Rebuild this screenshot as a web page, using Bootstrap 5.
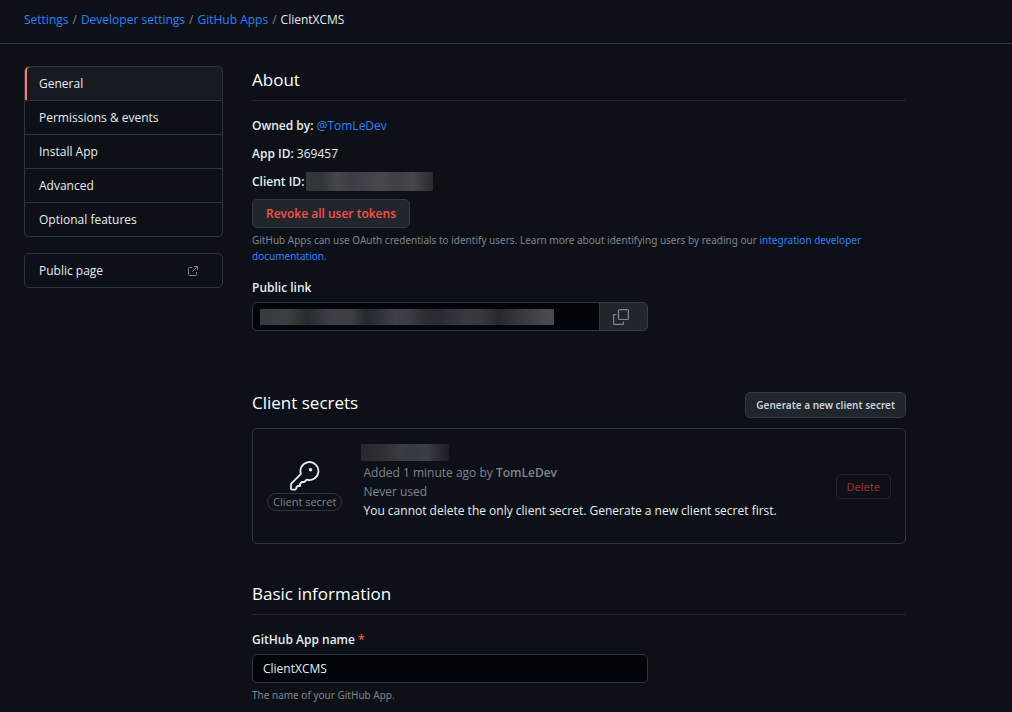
<!DOCTYPE html>
<html lang="en" data-bs-theme="dark">
<head>
<meta charset="utf-8">
<meta name="viewport" content="width=device-width, initial-scale=1">
<title>ClientXCMS</title>
<link href="https://cdn.jsdelivr.net/npm/bootstrap@5.3.0/dist/css/bootstrap.min.css" rel="stylesheet">
<style>
  body { background: #0d1117; color: #e6edf3; font-family: "Open Sans", "Noto Sans", sans-serif; font-size: 12px; line-height: 18px; }
  a { color: #2f81f7; text-decoration: none; }
  a:hover { text-decoration: underline; }
  b, .form-label { font-weight: 600; }
  .topbar { padding: 10px 24px 13px; border-bottom: 1px solid #30363d; }
  .breadcrumb { --bs-breadcrumb-font-size: 12px; --bs-breadcrumb-item-padding-x: 4px; --bs-breadcrumb-divider-color: #7d8590; --bs-breadcrumb-item-active-color: #e6edf3; line-height: 20px; }
  .page { max-width: 930px; padding: 22px 24px 8px; column-gap: 29px; }
  .side { flex: 0 0 199px; }
  .side .list-group { --bs-list-group-bg: #0d1117; --bs-list-group-border-color: #30363d; --bs-list-group-color: #e6edf3; --bs-list-group-action-color: #e6edf3; --bs-list-group-active-bg: #161b22; --bs-list-group-active-color: #e6edf3; --bs-list-group-active-border-color: #30363d; --bs-list-group-item-padding-x: 14px; --bs-list-group-item-padding-y: 8px; --bs-list-group-border-radius: 5px; }
  .side .list-group-item { padding-bottom: 7px; color: #e6edf3; }
  .side .list-group-item:hover { text-decoration: none; }
  .side .active { box-shadow: inset 2px 0 #f78166; }
  h2 { font-size: 17px; font-weight: 400; line-height: 22px; margin: 0; }
  .ruled { border-bottom: 1px solid #21262d; padding: 3px 0 9px; margin-bottom: 16px; }
  .fact { margin: 10px 0 9px; }
  .client-id { column-gap: 2px; }
  .hint { font-family: "Noto Sans", sans-serif; font-size: 10px; line-height: 16px; color: #7d8590; margin: 4px 0 0; }
  .dim { color: #7d8590; }
  .btn { --bs-btn-bg: #21262d; --bs-btn-border-color: #363b42; --bs-btn-color: #c9d1d9; --bs-btn-hover-bg: #30363d; --bs-btn-hover-border-color: #8b949e; --bs-btn-font-size: 12px; --bs-btn-font-weight: 600; --bs-btn-line-height: 19px; --bs-btn-padding-y: 4px; --bs-btn-padding-x: 13px; --bs-btn-border-radius: 5px; }
  .btn-revoke { --bs-btn-color: #f85149; --bs-btn-hover-color: #f85149; }
  .btn-compact { --bs-btn-font-size: 10px; --bs-btn-line-height: 16px; --bs-btn-padding-x: 10px; font-family: "Noto Sans", sans-serif; }
  .btn-delete { --bs-btn-font-size: 11px; --bs-btn-font-weight: 400; --bs-btn-disabled-bg: #0d1117; --bs-btn-disabled-border-color: #21262d; --bs-btn-disabled-color: #9b2f2d; --bs-btn-disabled-opacity: 1; --bs-btn-line-height: 15px; }
  .form-label { margin-bottom: 5px; display: block; }
  .hint + .form-label { margin-top: 15px; }
  .field { max-width: 396px; }
  .form-control, .form-control:focus { background: #010409; border-color: #30363d; color: #e6edf3; font-size: 12px; line-height: 19px; padding: 4px 10px; border-radius: 5px; }
  .btn-copy { color: #7d8590; padding-right: 18px; }
  .redact { display: inline-block; background: linear-gradient(90deg, #30363b, #30353a 12%, #44474a 24%, #3a3d46 36%, #45494c 58%, #3f3f47 72%, #454749 84%, #2a2b2d); }
  .redact-id { width: 127px; height: 19px; }
  .redact-link { left: 9px; top: 7px; width: 294px; height: 16px; z-index: 6; background: linear-gradient(90deg, #333c40, #3b3f40 9%, #262c2f 16%, #3c3e46 24%, #3c4145 31%, #24292d 36%, #292d3b 39%, #403e48 46%, #393c44 51%, #2c2e31 56%, #282b35 61%, #373b3f 70%, #35373c 76%, #26292b 81%, #373a3f 89%, #484a4d 98%); }
  .redact-secret { width: 88px; height: 17px; margin-left: -2px; background: linear-gradient(90deg, #25292e, #2d3132 25%, #393c44 45%, #343b43 60%, #3b3e46 75%, #1b1d22); }
  .secrets { margin-top: 61px; }
  .secret-box { border: 1px solid #30363d; border-radius: 5px; padding: 15px 14px; margin: 10px 0 36px; }
  .secret-info { line-height: 19px; padding: 0 20px 8px 21px; }
  .secret-id { padding-bottom: 2px; }
  .pill { border: 1px solid #30363d; font-size: 11px; line-height: 16px; padding: 0 5px; margin-top: 2px; }
  .req { color: #f85149; }
</style>
</head>
<body>
<header class="topbar">
  <nav aria-label="breadcrumb">
    <ol class="breadcrumb mb-0">
      <li class="breadcrumb-item"><a href="#">Settings</a></li>
      <li class="breadcrumb-item"><a href="#">Developer settings</a></li>
      <li class="breadcrumb-item"><a href="#">GitHub Apps</a></li>
      <li class="breadcrumb-item active" aria-current="page">ClientXCMS</li>
    </ol>
  </nav>
</header>
<div class="page d-flex align-items-start">
  <aside class="side">
    <nav class="list-group mb-3">
      <a href="#" class="list-group-item list-group-item-action active">General</a>
      <a href="#" class="list-group-item list-group-item-action">Permissions &amp; events</a>
      <a href="#" class="list-group-item list-group-item-action">Install App</a>
      <a href="#" class="list-group-item list-group-item-action">Advanced</a>
      <a href="#" class="list-group-item list-group-item-action">Optional features</a>
    </nav>
    <nav class="list-group">
      <a href="#" class="list-group-item list-group-item-action d-flex justify-content-between align-items-center pe-4">Public page
        <svg width="10" height="10" viewBox="0 0 10 10" fill="none" stroke="#7d8590" aria-hidden="true"><path d="M4 1.5H1.5a1 1 0 0 0-1 1v6a1 1 0 0 0 1 1h6a1 1 0 0 0 1-1V6M6 .5h3.5V4M9.2.8 4.5 5.5"/></svg>
      </a>
    </nav>
  </aside>
  <main class="flex-grow-1">
    <section>
      <h2 class="ruled">About</h2>
      <div><b>Owned by:</b> <a href="#">@TomLeDev</a></div>
      <div class="fact"><b>App ID:</b> 369457</div>
      <div class="client-id d-flex align-items-center mb-2"><b>Client ID:</b><span class="redact redact-id"></span></div>
      <button type="button" class="btn btn-revoke">Revoke all user tokens</button>
      <p class="hint">GitHub Apps can use OAuth credentials to identify users. Learn more about identifying users by reading our <a href="#">integration developer documentation</a>.</p>
      <label class="form-label" for="public-link">Public link</label>
      <div class="input-group field">
        <input class="form-control" id="public-link" type="text" readonly>
        <span class="redact redact-link position-absolute"></span>
        <button type="button" class="btn btn-copy d-flex align-items-center" aria-label="Copy">
          <svg width="16" height="16" viewBox="0 0 16 16" fill="none" stroke="currentColor" stroke-width="1.2"><rect x="5.5" y=".6" width="9.9" height="9.9" rx="1"/><path d="M3.5 5.5h-1.9a1 1 0 0 0-1 1v7.9a1 1 0 0 0 1 1h7.9a1 1 0 0 0 1-1v-1.9"/></svg>
        </button>
      </div>
    </section>
    <section class="secrets">
      <div class="d-flex justify-content-between align-items-start">
        <h2>Client secrets</h2>
        <button type="button" class="btn btn-compact">Generate a new client secret</button>
      </div>
      <div class="secret-box d-flex align-items-center">
        <div class="d-flex flex-column align-items-center">
          <svg width="30" height="30" viewBox="0 0 30 30" fill="none" stroke="#e6edf3" stroke-width="1.8" stroke-linejoin="round" aria-hidden="true"><path d="M10.9 12.9A9 9 0 1 1 16.7 18.6L14.3 21H11.8L10 22.8V25H7.8L6.4 26.4V27.4L5.2 28.6H2.2A1.2 1.2 0 0 1 1 27.4V23.4A1.5 1.5 0 0 1 1.5 22.3Z"/><circle cx="20.6" cy="8.8" r="1.7" fill="#e6edf3" stroke="none"/></svg>
          <span class="pill dim rounded-pill text-nowrap">Client secret</span>
        </div>
        <div class="secret-info flex-grow-1">
          <div class="secret-id d-flex"><span class="redact redact-secret"></span></div>
          <div class="dim">Added 1 minute ago by <b>TomLeDev</b></div>
          <div class="dim">Never used</div>
          <div>You cannot delete the only client secret. Generate a new client secret first.</div>
        </div>
        <button type="button" class="btn btn-compact btn-delete" disabled>Delete</button>
      </div>
    </section>
    <section>
      <h2 class="ruled">Basic information</h2>
      <label class="form-label" for="app-name">GitHub App name <span class="req">*</span></label>
      <input class="form-control field" id="app-name" type="text" value="ClientXCMS" required>
      <p class="hint">The name of your GitHub App.</p>
    </section>
  </main>
</div>
<script src="https://cdn.jsdelivr.net/npm/bootstrap@5.3.0/dist/js/bootstrap.bundle.min.js"></script>
</body>
</html>
